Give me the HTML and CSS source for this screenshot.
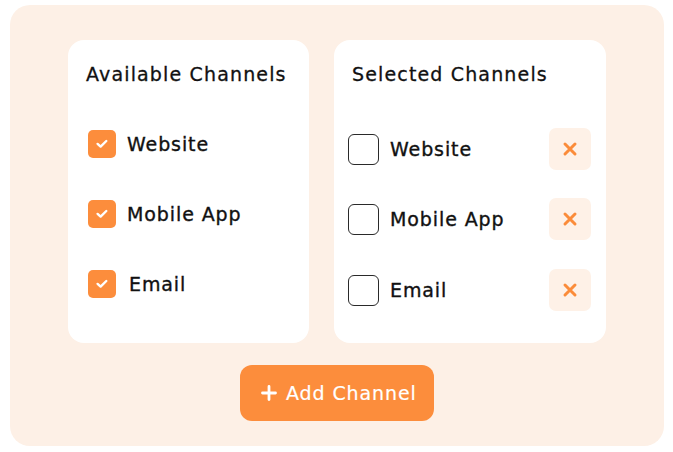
FILE: index.html
```html
<!DOCTYPE html>
<html>
<head>
<meta charset="utf-8">
<link rel="stylesheet" href="styles.css">
</head>
<body>
<div class="panel">
  <div class="cards">
    <section class="card card-available">
      <h2 class="card-title">Available Channels</h2>
      <ul class="list list-available">
        <li class="row">
          <span class="check checked"><svg viewBox="0 0 14 14" width="14" height="14"><path d="M2.6 6.9 L5.6 9.6 L11.3 4" fill="none" stroke="#fff" stroke-width="2.4" stroke-linecap="round" stroke-linejoin="round"/></svg></span>
          <span class="label">Website</span>
        </li>
        <li class="row">
          <span class="check checked"><svg viewBox="0 0 14 14" width="14" height="14"><path d="M2.6 6.9 L5.6 9.6 L11.3 4" fill="none" stroke="#fff" stroke-width="2.4" stroke-linecap="round" stroke-linejoin="round"/></svg></span>
          <span class="label">Mobile App</span>
        </li>
        <li class="row">
          <span class="check checked"><svg viewBox="0 0 14 14" width="14" height="14"><path d="M2.6 6.9 L5.6 9.6 L11.3 4" fill="none" stroke="#fff" stroke-width="2.4" stroke-linecap="round" stroke-linejoin="round"/></svg></span>
          <span class="label label-email">Email</span>
        </li>
      </ul>
    </section>
    <section class="card card-selected">
      <h2 class="card-title">Selected Channels</h2>
      <ul class="list list-selected">
        <li class="row">
          <span class="check empty"></span>
          <span class="label">Website</span>
          <button class="remove"><svg viewBox="0 0 16 16" width="16" height="16"><path d="M3 3 L13 13 M13 3 L3 13" stroke="#fb8c3a" stroke-width="3" stroke-linecap="round"/></svg></button>
        </li>
        <li class="row">
          <span class="check empty"></span>
          <span class="label">Mobile App</span>
          <button class="remove"><svg viewBox="0 0 16 16" width="16" height="16"><path d="M3 3 L13 13 M13 3 L3 13" stroke="#fb8c3a" stroke-width="3" stroke-linecap="round"/></svg></button>
        </li>
        <li class="row">
          <span class="check empty"></span>
          <span class="label">Email</span>
          <button class="remove"><svg viewBox="0 0 16 16" width="16" height="16"><path d="M3 3 L13 13 M13 3 L3 13" stroke="#fb8c3a" stroke-width="3" stroke-linecap="round"/></svg></button>
        </li>
      </ul>
    </section>
  </div>
  <div class="actions">
    <button class="add-btn"><svg viewBox="0 0 16 16" width="16" height="16"><path d="M8 1.5 V14.5 M1.5 8 H14.5" stroke="#fff" stroke-width="2.8" stroke-linecap="round"/></svg><span>Add Channel</span></button>
  </div>
</div>
</body>
</html>
```

FILE: styles.css
```css
* { box-sizing: border-box; }
html, body { margin: 0; padding: 0; background: #ffffff; }
body {
  width: 673px;
  height: 452px;
  font-family: "DejaVu Sans", "Liberation Sans", sans-serif;
  color: #111111;
}
.panel {
  margin: 5px 0 0 10px;
  width: 654px;
  height: 441px;
  background: #fdf0e6;
  border-radius: 20px;
  padding: 35px 0 0 58px;
}
.cards {
  display: flex;
  gap: 25px;
}
.card {
  background: #ffffff;
  border-radius: 16px;
  height: 303px;
  padding-top: 20px;
}
.card-available { width: 241px; padding-left: 20px; }
.card-selected { width: 272px; padding-left: 14px; padding-right: 15px; }
.card-title {
  margin: 0;
  font-size: 19px;
  font-weight: 400;
  line-height: 28px;
  letter-spacing: 1.15px;
  -webkit-text-stroke: 0.3px #111111;
}
.card-available .card-title { margin-left: -2px; }
.card-selected .card-title { margin-left: 4px; }
.list {
  list-style: none;
  margin: 0;
  padding: 0;
  display: flex;
  flex-direction: column;
  gap: 28px;
}
.list-available { margin-top: 35px; }
.list-selected { margin-top: 40px; }
.row {
  display: flex;
  align-items: center;
  height: 42px;
}
.list-selected .row:nth-child(3) { margin-top: 1px; }
.check {
  flex: none;
  display: flex;
  align-items: center;
  justify-content: center;
}
.check.checked {
  width: 28px;
  height: 28px;
  border-radius: 5px;
  background: #fc8d3c;
}
.check.empty {
  width: 31px;
  height: 31px;
  border-radius: 6px;
  border: 1.3px solid #2a2a2a;
  background: #fff;
}
.label {
  margin-left: 11px;
  font-size: 19px;
  font-weight: 400;
  line-height: 28px;
  letter-spacing: 0.9px;
  -webkit-text-stroke: 0.35px #111111;
}
.label-email { margin-left: 13px; }
.remove {
  margin-left: auto;
  width: 42px;
  height: 42px;
  border: none;
  border-radius: 7px;
  background: #fef1e7;
  display: flex;
  align-items: center;
  justify-content: center;
  padding: 0;
}
.actions {
  display: flex;
  justify-content: center;
  margin-top: 22px;
  padding-right: 58px;
}
.add-btn {
  width: 194px;
  height: 56px;
  border: none;
  border-radius: 12px;
  background: #fc8d3c;
  color: #ffffff;
  font-family: "DejaVu Sans", "Liberation Sans", sans-serif;
  font-size: 19px;
  font-weight: 400;
  letter-spacing: 0.9px;
  -webkit-text-stroke: 0.2px #ffffff;
  display: flex;
  align-items: center;
  gap: 9px;
  padding: 0 0 0 21px;
}
```
